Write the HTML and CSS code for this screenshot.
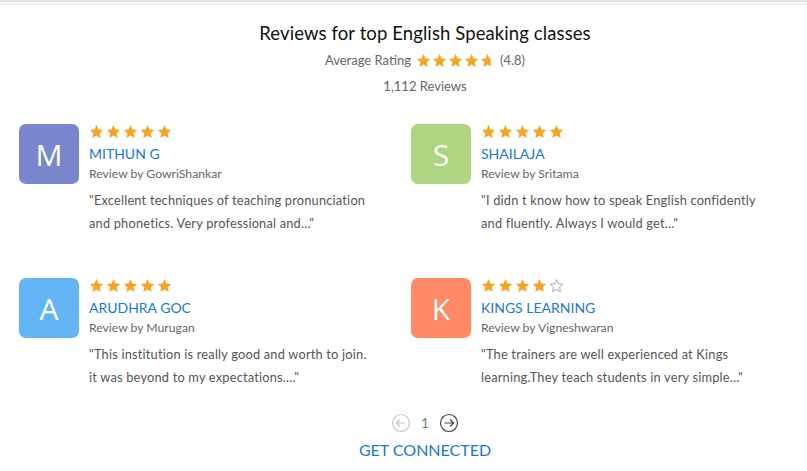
FILE: index.html
```html
<!DOCTYPE html>
<html>
<head>
<meta charset="utf-8">
<link rel="stylesheet" href="styles.css">
</head>
<body>
<svg width="0" height="0" class="defs">
  <defs>
    <symbol id="star" viewBox="0 0 24 24"><path d="M12 1.5l3.2 7.1 7.6.8-5.7 5.2 1.6 7.6L12 18.3l-6.7 3.9 1.6-7.6L1.2 9.4l7.6-.8z"/></symbol>
    <clipPath id="part"><rect x="0" y="0" width="17" height="24"/></clipPath>
  </defs>
</svg>
<div class="topbar"></div>
<main class="wrap">
  <header class="head">
    <h1 class="title">Reviews for top English Speaking classes</h1>
    <div class="avg">Average Rating
      <span class="stars big">
        <svg><use href="#star"/></svg><svg><use href="#star"/></svg><svg><use href="#star"/></svg><svg><use href="#star"/></svg><svg viewBox="0 0 24 24"><path class="empty-fill" d="M12 1.5l3.2 7.1 7.6.8-5.7 5.2 1.6 7.6L12 18.3l-6.7 3.9 1.6-7.6L1.2 9.4l7.6-.8z"/><g clip-path="url(#part)"><path d="M12 1.5l3.2 7.1 7.6.8-5.7 5.2 1.6 7.6L12 18.3l-6.7 3.9 1.6-7.6L1.2 9.4l7.6-.8z"/></g></svg>
      </span>
      (4.8)</div>
    <div class="count">1,112 Reviews</div>
  </header>

  <section class="grid">
    <article class="review">
      <div class="avatar c-m">M</div>
      <div class="body">
        <div class="stars"><svg><use href="#star"/></svg><svg><use href="#star"/></svg><svg><use href="#star"/></svg><svg><use href="#star"/></svg><svg><use href="#star"/></svg></div>
        <a class="name">MITHUN G</a>
        <div class="by">Review by GowriShankar</div>
        <p class="quote">"Excellent techniques of teaching pronunciation and phonetics. Very professional and..."</p>
      </div>
    </article>
    <article class="review">
      <div class="avatar c-s">S</div>
      <div class="body">
        <div class="stars"><svg><use href="#star"/></svg><svg><use href="#star"/></svg><svg><use href="#star"/></svg><svg><use href="#star"/></svg><svg><use href="#star"/></svg></div>
        <a class="name">SHAILAJA</a>
        <div class="by">Review by Sritama</div>
        <p class="quote">"I didn t know how to speak English confidently and fluently. Always I would get..."</p>
      </div>
    </article>
    <article class="review">
      <div class="avatar c-a">A</div>
      <div class="body">
        <div class="stars"><svg><use href="#star"/></svg><svg><use href="#star"/></svg><svg><use href="#star"/></svg><svg><use href="#star"/></svg><svg><use href="#star"/></svg></div>
        <a class="name">ARUDHRA GOC</a>
        <div class="by">Review by Murugan</div>
        <p class="quote">"This institution is really good and worth to join. it was beyond to my expectations...."</p>
      </div>
    </article>
    <article class="review">
      <div class="avatar c-k">K</div>
      <div class="body">
        <div class="stars"><svg><use href="#star"/></svg><svg><use href="#star"/></svg><svg><use href="#star"/></svg><svg><use href="#star"/></svg><svg class="empty" viewBox="0 0 24 24"><path d="M12 2.5l3 6.6 7.1.8-5.3 4.9 1.5 7.1L12 18.3l-6.3 3.6 1.5-7.1L1.9 9.9 9 9.1z"/></svg></div>
        <a class="name">KINGS LEARNING</a>
        <div class="by">Review by Vigneshwaran</div>
        <p class="quote">"The trainers are well experienced at Kings learning.They teach students in very simple..."</p>
      </div>
    </article>
  </section>

  <nav class="pager">
    <span class="arrow off"><svg viewBox="0 0 20 20"><circle cx="10" cy="10" r="8.5"/><path d="M14.5 10H5.5M9 6.5L5.5 10 9 13.5"/></svg></span>
    <span class="page">1</span>
    <span class="arrow on"><svg viewBox="0 0 20 20"><circle cx="10" cy="10" r="8.5"/><path d="M5.5 10h9M11 6.5l3.5 3.5-3.5 3.5"/></svg></span>
  </nav>
  <a class="connect">GET CONNECTED</a>
</main>
</body>
</html>
```
FILE: styles.css
```css
html, body {
  margin: 0;
  padding: 0;
  background: #fff;
  overflow: hidden;
}
body {
  font-family: Lato, "Noto Sans", sans-serif;
  color: #333;
  width: 807px;
  height: 471px;
}
.defs { position: absolute; }
.topbar {
  height: 2px;
  background: #e6e6e6;
  border-bottom: 1px solid #fff;
  box-shadow: 0 2px 0 #f3f3f3;
}
.wrap {
  width: 812px;
  margin-left: 19px;
  display: flex;
  flex-direction: column;
  align-items: center;
}
.head {
  display: flex;
  flex-direction: column;
  align-items: center;
  margin-top: 18px;
}
.title {
  margin: 0;
  font-size: 18.5px;
  font-weight: 400;
  color: #111;
  line-height: 24px;
  letter-spacing: 0.1px;
}
.avg {
  margin-top: 6px;
  font-size: 13px;
  color: #666;
  line-height: 18px;
  display: flex;
  align-items: center;
  gap: 5px;
}
.count {
  margin-top: 8px;
  font-size: 13px;
  color: #666;
  line-height: 18px;
}
.stars {
  display: flex;
  gap: 2px;
  fill: #f5a524;
}
.stars svg {
  width: 15px;
  height: 15px;
}
.stars.big { gap: 1px; }
.stars.big svg { width: 15px; height: 15px; }
.empty-fill { fill: #fff; }
.stars svg.empty {
  fill: none;
  stroke: #999;
  stroke-width: 1.3;
}
.grid {
  align-self: stretch;
  display: grid;
  grid-template-columns: 392px 392px;
  row-gap: 43px;
  margin-top: 29px;
}
.review {
  display: flex;
  gap: 10px;
}
.avatar {
  width: 60px;
  height: 60px;
  border-radius: 7px;
  color: #fff;
  font-size: 30px;
  display: flex;
  align-items: center;
  justify-content: center;
  flex: none;
  font-family: "Open Sans", Lato, sans-serif;
}
.c-m { background: #7986cb; }
.c-s { background: #aed581; }
.c-a { background: #64b5f6; }
.c-k { background: #ff8a65; }
.body {
  display: flex;
  flex-direction: column;
}
.name {
  color: #1a78cf;
  font-size: 14px;
  line-height: 18px;
  margin-top: 6px;
}
.by {
  color: #666;
  font-size: 12.2px;
  line-height: 16px;
  margin-top: 3px;
}
.quote {
  margin: 7px 0 0;
  width: 285px;
  color: #555;
  font-size: 12.8px;
  line-height: 23px;
  letter-spacing: 0.2px;
}
.pager {
  display: flex;
  align-items: center;
  gap: 7px;
  margin-top: 24px;
}
.arrow svg {
  width: 20px;
  height: 20px;
  display: block;
  fill: none;
  stroke-width: 1.2;
}
.arrow.off svg { stroke: #c8c8c8; }
.arrow.on svg { stroke: #444; }
.page {
  font-size: 13px;
  color: #5b8a5b;
  width: 14px;
  text-align: center;
}
.connect {
  margin-top: 7px;
  color: #1a78cf;
  font-size: 16px;
  line-height: 20px;
}
```
